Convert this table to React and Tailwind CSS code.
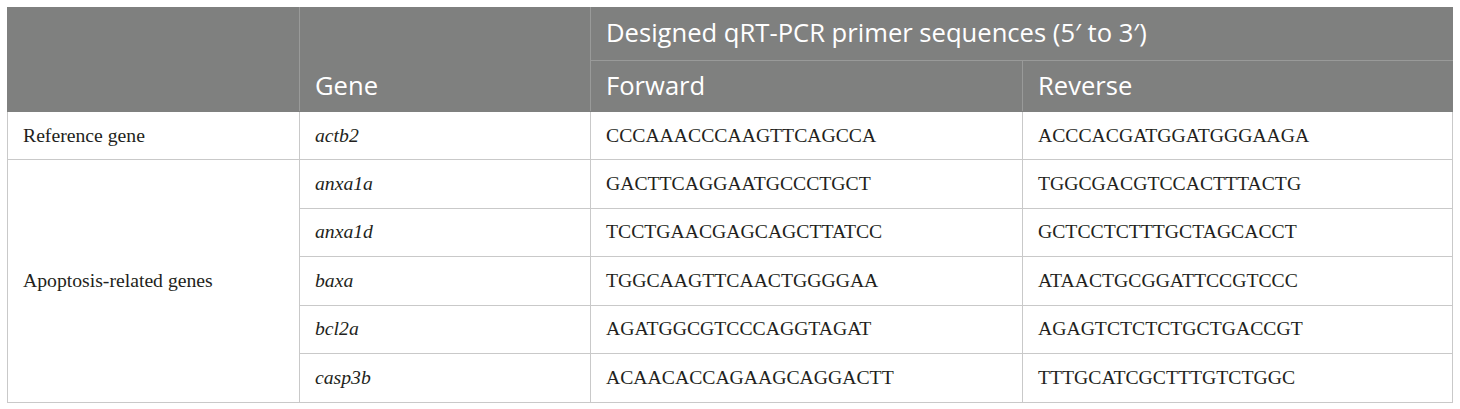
import React from "react";

const rows = [
  { gene: "anxa1a", fwd: "GACTTCAGGAATGCCCTGCT", rev: "TGGCGACGTCCACTTTACTG" },
  { gene: "anxa1d", fwd: "TCCTGAACGAGCAGCTTATCC", rev: "GCTCCTCTTTGCTAGCACCT" },
  { gene: "baxa", fwd: "TGGCAAGTTCAACTGGGGAA", rev: "ATAACTGCGGATTCCGTCCC" },
  { gene: "bcl2a", fwd: "AGATGGCGTCCCAGGTAGAT", rev: "AGAGTCTCTCTGCTGACCGT" },
  { gene: "casp3b", fwd: "ACAACACCAGAAGCAGGACTT", rev: "TTTGCATCGCTTTGTCTGGC" },
];

const td = "border border-[#c9c9c9] px-[15px] align-middle";

export default function App() {
  return (
    <div className="min-h-[409px] w-[1460px] bg-white pl-[7px] pt-[7px]">
      <table className="w-[1445px] table-fixed border-collapse text-[19.7px] text-[#231f20] [font-family:'Liberation_Serif',serif]">
        <colgroup>
          <col className="w-[292px]" />
          <col className="w-[291px]" />
          <col className="w-[432px]" />
          <col className="w-[430px]" />
        </colgroup>
        <thead className="bg-[#7f807f] text-left text-[25.6px] leading-[32px] font-normal text-white [font-family:'Open_Sans',sans-serif]">
          <tr className="h-[53px]">
            <th rowSpan={2} className="border border-[#7f807f] border-r-[#999a99]" />
            <th rowSpan={2} className="border border-[#7f807f] border-r-[#999a99] px-[15px] pb-[9px] align-bottom font-normal">
              Gene
            </th>
            <th colSpan={2} className="border border-[#7f807f] border-b-[#999a99] px-[15px] pb-[2px] align-middle font-normal">
              Designed qRT-PCR primer sequences (5′ to 3′)
            </th>
          </tr>
          <tr className="h-[51px]">
            <th className="border border-[#7f807f] border-r-[#999a99] px-[15px] pb-[1px] align-middle font-normal">Forward</th>
            <th className="border border-[#7f807f] px-[15px] pb-[1px] align-middle font-normal">Reverse</th>
          </tr>
        </thead>
        <tbody>
          <tr className="h-[48px]">
            <td className={td}>Reference gene</td>
            <td className={`${td} italic`}>actb2</td>
            <td className={td}>CCCAAACCCAAGTTCAGCCA</td>
            <td className={td}>ACCCACGATGGATGGGAAGA</td>
          </tr>
          {rows.map((r, i) => (
            <tr key={r.gene} className="h-[48.5px]">
              {i === 0 && (
                <td rowSpan={rows.length} className={td}>
                  Apoptosis-related genes
                </td>
              )}
              <td className={`${td} italic`}>{r.gene}</td>
              <td className={td}>{r.fwd}</td>
              <td className={td}>{r.rev}</td>
            </tr>
          ))}
        </tbody>
      </table>
    </div>
  );
}
